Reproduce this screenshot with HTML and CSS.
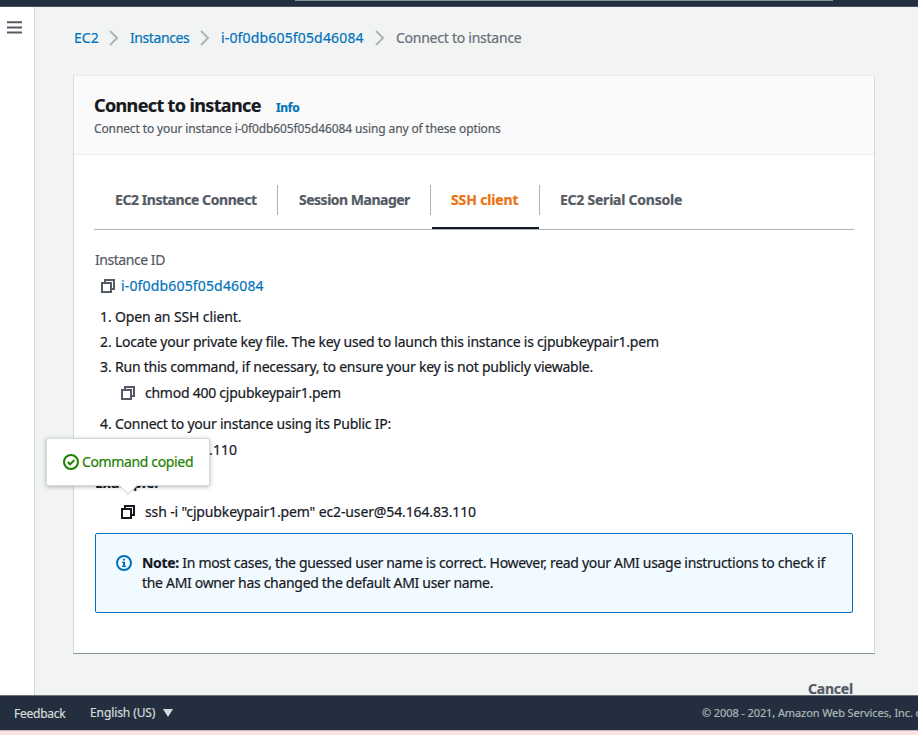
FILE: index.html
```html
<!DOCTYPE html>
<html lang="en">
<head>
<meta charset="utf-8">
<title>Connect to instance</title>
<link rel="stylesheet" href="styles.css">
</head>
<body>
<svg class="defs" aria-hidden="true">
  <symbol id="copy" viewBox="0 0 16 16"><path d="M2 5h9v9H2zM5 5V2h9v9h-3" fill="none" stroke="currentColor" stroke-width="2"/></symbol>
  <symbol id="chevron" viewBox="0 0 10 16"><path d="M1 1l7 7-7 7" fill="none" stroke="#aab7b8" stroke-width="2"/></symbol>
</svg>
<header class="topbar"><div class="search"></div></header>
<div class="shell">
  <aside class="rail"><svg class="menu" viewBox="0 0 15 13"><path d="M0 1.2h15M0 6.4h15M0 11.6h15" stroke="#545b64" stroke-width="2"/></svg></aside>
  <main class="main">
    <nav class="crumbs">
      <a class="c1">EC2</a><svg><use href="#chevron"/></svg>
      <a class="c2">Instances</a><svg><use href="#chevron"/></svg>
      <a class="c3">i-0f0db605f05d46084</a><svg><use href="#chevron"/></svg>
      <span class="c4">Connect to instance</span>
    </nav>
    <section class="card">
      <div class="card-head">
        <div class="title-row"><h1>Connect to instance</h1><a class="info">Info</a></div>
        <p class="desc">Connect to your instance i-0f0db605f05d46084 using any of these options</p>
      </div>
      <div class="card-body">
        <div class="tabs">
          <div class="tab t1"><span>EC2 Instance Connect</span></div>
          <div class="tab t2"><span>Session Manager</span></div>
          <div class="tab t3 active"><span>SSH client</span></div>
          <div class="tab t4"><span>EC2 Serial Console</span></div>
        </div>
        <div class="label">Instance ID</div>
        <div class="id-row"><svg class="copy"><use href="#copy"/></svg><a>i-0f0db605f05d46084</a></div>
        <div class="step"><span>1.</span><span class="s1">Open an SSH client.</span></div>
        <div class="step"><span>2.</span><span class="s2">Locate your private key file. The key used to launch this instance is cjpubkeypair1.pem</span></div>
        <div class="step"><span>3.</span><span class="s3">Run this command, if necessary, to ensure your key is not publicly viewable.</span></div>
        <div class="cmd"><svg class="copy"><use href="#copy"/></svg><span class="k1">chmod 400 cjpubkeypair1.pem</span></div>
        <div class="step"><span>4.</span><span class="s4">Connect to your instance using its Public IP:</span></div>
        <div class="cmd"><svg class="copy"><use href="#copy"/></svg><span class="k2">54.164.83.110</span></div>
        <div class="example">Example:</div>
        <div class="cmd copied"><svg class="copy"><use href="#copy"/></svg><span class="k3">ssh -i "cjpubkeypair1.pem" ec2-user@54.164.83.110</span>
          <div class="popover">
            <svg viewBox="0 0 16 16" fill="none" stroke="#1d8102" stroke-width="2"><circle cx="8" cy="8" r="7"/><path d="M4.8 8l2.3 2.3 4.2-4.2"/></svg>
            <span>Command copied</span>
          </div>
        </div>
        <div class="note">
          <svg viewBox="0 0 16 16"><circle cx="8" cy="8" r="7" fill="none" stroke="#0073bb" stroke-width="2"/><path d="M7 3.8h2v1.7H7zM6 6.7h3v4h1.2V12H5.9v-1.3H7V8H6z" fill="#0073bb"/></svg>
          <div><p class="n1"><b>Note:</b> In most cases, the guessed user name is correct. However, read your AMI usage instructions to check if</p><p class="n2">the AMI owner has changed the default AMI user name.</p></div>
        </div>
      </div>
    </section>
    <div class="actions"><a>Cancel</a></div>
  </main>
</div>
<footer class="footer">
  <span class="feedback">Feedback</span>
  <span class="lang">English (US)</span><svg class="caret" viewBox="0 0 10 8"><path d="M0 0h10L5 8z" fill="#d5dbdb"/></svg>
  <span class="copyright">© 2008 - 2021, Amazon Web Services, Inc. or its affiliates.</span>
</footer>
<div class="strip"></div>
</body>
</html>
```
FILE: styles.css
```css
* { box-sizing: border-box; }
body { margin: 0; width: 918px; height: 735px; overflow: hidden; display: flex; flex-direction: column; font: 450 14px/20px "Noto Sans", sans-serif; color: #16191f; background: #f2f3f3; -webkit-text-stroke: .2px currentColor; }
h1, p { margin: 0; }
a { color: #0073bb; }
span, a, h1, p { white-space: nowrap; }
svg { -webkit-text-stroke: 0; }
.defs { display: none; }
.topbar { flex: none; height: 7px; background: #232f3e; border-bottom: 1px solid #4a5461; }
.search { width: 538px; height: 1px; margin-left: 295px; background: #879596; }
.shell { flex: none; height: 688px; display: flex; overflow: hidden; }
.rail { flex: none; width: 35px; background: #fff; border-right: 1px solid #d5dbdb; padding: 14px 0 0 7px; }
.menu { display: block; width: 15px; height: 13px; }
.main { flex: 1; padding: 21px 44px 0 38px; }
.crumbs { display: flex; align-items: center; height: 20px; padding-left: 1px; }
.crumbs svg { flex: none; width: 10px; height: 16px; margin: 0 11px; }
.c1 { width: 24px; }
.c2 { width: 59px; letter-spacing: -.42px; }
.c3 { width: 143px; letter-spacing: .16px; }
.c4 { color: #687078; letter-spacing: -.25px; }
.card { margin-top: 27px; width: 802px; height: 579px; background: #fff; border: 1px solid #d5dbdb; border-top-color: #eaeded; border-bottom-color: #879596; }
.card-head { height: 79px; padding: 18px 20px 0; background: #fafafa; border-bottom: 1px solid #eaeded; }
.title-row { display: flex; align-items: baseline; gap: 15px; height: 25px; line-height: 22px; }
h1 { width: 167px; font-size: 18px; line-height: 22px; letter-spacing: -.64px; }
.info { font-size: 12px; font-weight: 700; letter-spacing: -.3px; }
.desc { font-size: 12px; line-height: 20px; color: #545b64; letter-spacing: -.12px; }
.card-body { padding: 30px 20px 0; }
.tabs { display: flex; height: 45px; border-bottom: 1px solid #aab7b8; font-weight: 700; color: #545b64; }
.tab { height: 45px; border-bottom: 3px solid transparent; }
.tab span { display: block; height: 30px; line-height: 30px; padding-left: 21px; border-right: 1px solid #aab7b8; }
.t1 { width: 184px; letter-spacing: -.44px; }
.t2 { width: 153px; letter-spacing: -.5px; }
.t3 { width: 109px; letter-spacing: -.15px; }
.t3 span { padding-left: 20px; }
.t4 { width: 160px; letter-spacing: -.24px; }
.t4 span { border: 0; padding-left: 20px; }
.active { color: #ec7211; background: linear-gradient(#16191f, #16191f) 1px 42px / 107px 2px no-repeat; }
.label { margin: 20px 0 0 1px; color: #545b64; letter-spacing: -.45px; }
.id-row { display: flex; align-items: center; gap: 5px; height: 20px; margin: 6px 0 8px 6px; letter-spacing: .16px; }
.copy { flex: none; width: 16px; height: 16px; color: #545b64; }
.step { display: flex; height: 25px; line-height: 25px; padding-left: 6px; }
.step span:first-child { flex: none; width: 15px; }
.s1 { letter-spacing: -.12px; }
.s2 { letter-spacing: -.23px; }
.s3, .s4 { letter-spacing: -.24px; }
.k1 { letter-spacing: -.25px; }
.k2 { letter-spacing: .06px; }
.k3 { letter-spacing: -.13px; }
.cmd { display: flex; align-items: center; gap: 9px; height: 28px; margin: 0 0 4px 26px; }
.example { height: 20px; margin: 9px 0 0 1px; font-weight: 700; }
.copied { position: relative; height: 26px; margin-top: 6px; margin-bottom: 8px; }
.copied .copy { color: #16191f; }
.popover { position: absolute; left: -74px; top: -61px; width: 164px; height: 48px; display: flex; align-items: center; gap: 3px; padding-left: 16px; background: #fff; border: 1px solid #d5dbdb; border-radius: 2px; box-shadow: 0 1px 4px rgba(0,28,36,.3); color: #1d8102; letter-spacing: -.36px; }
.popover svg { width: 16px; height: 16px; }
.popover::after { content: ""; position: absolute; left: 74px; top: 39px; width: 13px; height: 13px; background: #fff; transform: rotate(45deg); border: solid #d5dbdb; border-width: 0 1px 1px 0; }
.note { display: flex; gap: 10px; width: 758px; height: 80px; margin-left: 1px; padding: 19px 20px; background: #f1faff; border: 1px solid #0073bb; border-radius: 2px; }
.note svg { flex: none; width: 16px; height: 16px; margin-top: 2px; }
.n1 { letter-spacing: -.31px; }
.n2 { letter-spacing: -.31px; }
.actions { display: flex; justify-content: flex-end; margin: 25px 22px 0 0; font-weight: 700; letter-spacing: -.2px; }
.actions a { color: #545b64; }
.footer { flex: none; height: 35px; display: flex; align-items: center; background: #232f3e; border-top: 1px solid #687078; color: #d5dbdb; font-size: 12px; overflow: hidden; }
.feedback { width: 76px; padding: 1px 0 0 14px; margin-right: 14px; letter-spacing: -.25px; }
.lang { width: 66px; letter-spacing: -.1px; }
.caret { width: 10px; height: 8px; margin-left: 7px; }
.copyright { margin-left: auto; width: 216px; color: #aab7b8; font-size: 11px; letter-spacing: -.1px; }
.strip { flex: 1; background: #ffdfe4; border-top: 1px solid #c9b6bd; }
```
